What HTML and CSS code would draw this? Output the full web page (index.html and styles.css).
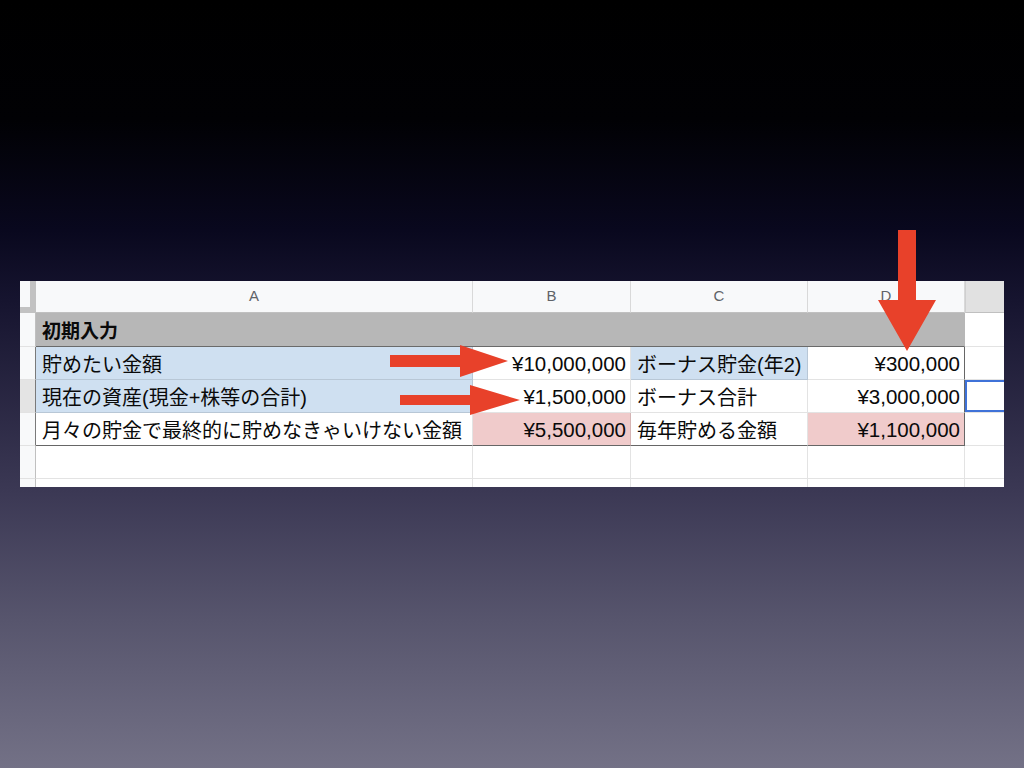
FILE: index.html
```html
<!DOCTYPE html>
<html lang="ja">
<head>
<meta charset="utf-8">
<title>初期入力</title>
<link rel="stylesheet" href="styles.css">
</head>
<body>
<div class="slide">
  <div class="sheet">
    <div class="grid">
      <div class="corner"></div>
      <div class="colhead">A</div>
      <div class="colhead">B</div>
      <div class="colhead">C</div>
      <div class="colhead">D</div>
      <div class="colhead sel"></div>

      <div class="rownum"></div>
      <div class="cell title">初期入力</div>
      <div class="cell"></div>

      <div class="rownum dark"></div>
      <div class="cell blue">貯めたい金額</div>
      <div class="cell num">¥10,000,000</div>
      <div class="cell blue">ボーナス貯金(年2)</div>
      <div class="cell num edge">¥300,000</div>
      <div class="cell"></div>

      <div class="rownum dark selrow"></div>
      <div class="cell blue">現在の資産(現金+株等の合計)</div>
      <div class="cell num">¥1,500,000</div>
      <div class="cell">ボーナス合計</div>
      <div class="cell num edge">¥3,000,000</div>
      <div class="cell active"></div>

      <div class="rownum dark"></div>
      <div class="cell last">月々の貯金で最終的に貯めなきゃいけない金額</div>
      <div class="cell num pink last">¥5,500,000</div>
      <div class="cell last">毎年貯める金額</div>
      <div class="cell num pink edge last">¥1,100,000</div>
      <div class="cell"></div>

      <div class="rownum"></div>
      <div class="cell"></div>
      <div class="cell"></div>
      <div class="cell"></div>
      <div class="cell"></div>
      <div class="cell"></div>

      <div class="rownum"></div>
      <div class="cell"></div>
      <div class="cell"></div>
      <div class="cell"></div>
      <div class="cell"></div>
      <div class="cell"></div>
    </div>
  </div>
  <svg class="arrows" width="1024" height="768" viewBox="0 0 1024 768" aria-hidden="true">
    <polygon points="390,355 460,355 460,345 508,361 460,377 460,367 390,367" />
    <polygon points="400,395 470,395 470,385 520,400 470,415 470,405 400,405" />
    <polygon points="898,230 916,230 916,300 936,300 907,351 878,300 898,300" />
  </svg>
</div>
</body>
</html>
```

FILE: styles.css
```css
* {
  box-sizing: border-box;
}

html, body {
  margin: 0;
  padding: 0;
}

body {
  width: 1024px;
  height: 768px;
  overflow: hidden;
  background: linear-gradient(to bottom,
    #000000 0px,
    #010104 120px,
    #09081e 230px,
    #16142f 300px,
    #3b3854 490px,
    #57556d 620px,
    #737186 768px);
  font-family: "Liberation Sans", "Noto Sans CJK JP", sans-serif;
}

.slide {
  position: relative;
  width: 1024px;
  height: 768px;
  padding: 281px 20px 0 20px;
}

.sheet {
  width: 984px;
  height: 206px;
  overflow: hidden;
  background: #ffffff;
}

.grid {
  display: grid;
  grid-template-columns: 16px 437px 158px 177px 157px 100px;
  grid-template-rows: 32px 34px 33px 33px 33px 33px 33px;
}

.corner {
  background: #f8f9fa;
  border-right: 6px solid #c2c2c2;
  border-bottom: 6px solid #c2c2c2;
}

.colhead {
  display: flex;
  align-items: center;
  justify-content: center;
  padding-bottom: 3px;
  background: #f8f9fa;
  color: #5f6368;
  font-size: 15px;
  border-right: 1px solid #d9d9d9;
  border-bottom: 1px solid #c0c0c0;
}

.colhead.sel {
  background: #e1e1e1;
  border-left: 1px solid #cfcfcf;
}

.rownum {
  background: #f8f9fa;
  border-right: 1px solid #c0c0c0;
  border-bottom: 1px solid #e2e2e2;
}

.rownum.selrow {
  background: #e4e4e4;
}

.rownum.dark {
  border-right-color: #7a7a7a;
}

.cell {
  display: flex;
  align-items: center;
  padding: 0 4px 0 6px;
  font-size: 20px;
  color: #0a0a0a;
  white-space: nowrap;
  overflow: hidden;
  border-right: 1px solid rgba(0, 0, 0, 0.11);
  border-bottom: 1px solid rgba(0, 0, 0, 0.11);
}

.cell.title {
  grid-column: span 4;
  background: #b7b7b7;
  font-weight: bold;
  font-size: 19px;
  border-right: 1px solid #b7b7b7;
  border-bottom: 1px solid #6a6a6a;
}

.cell.blue {
  background: #cfe0f1;
}

.cell.pink {
  background: #f0cbcb;
}

.cell.num {
  justify-content: flex-end;
  font-size: 20.5px;
  padding-top: 2px;
}

.cell.edge {
  border-right: 1px solid #666666;
}

.cell.last {
  border-bottom: 1px solid #666666;
}

.cell.active {
  box-shadow: inset 0 0 0 2px #3f72d8;
}

.arrows {
  position: absolute;
  top: 0;
  left: 0;
  pointer-events: none;
}

.arrows polygon {
  fill: #e8412a;
}
```
